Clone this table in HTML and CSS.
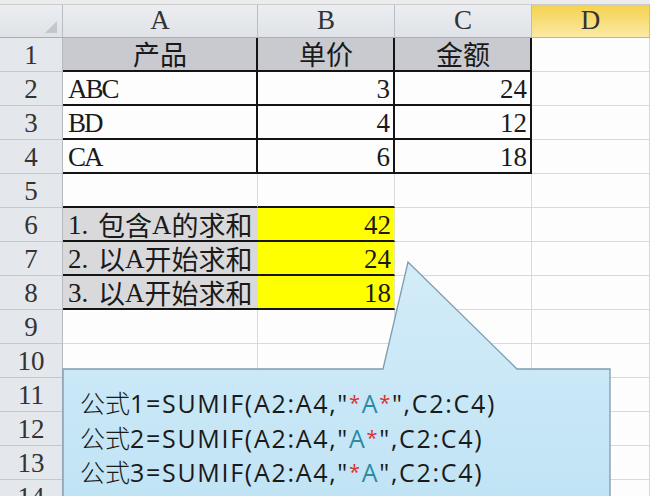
FILE: index.html
```html
<!DOCTYPE html>
<html>
<head>
<meta charset="utf-8">
<link rel="stylesheet" href="styles.css">
</head>
<body>
<div class="sheet">
  <div class="topstrip"></div>
  <div class="grid">
    <div class="ch corner"><span class="tri"></span></div>
    <div class="ch">A</div>
    <div class="ch">B</div>
    <div class="ch">C</div>
    <div class="ch sel">D</div>

    <div class="rh">1</div>
    <div class="c hd bb br"><span class="cj">产品</span></div>
    <div class="c hd bb br"><span class="cj">单价</span></div>
    <div class="c hd bb br"><span class="cj">金额</span></div>
    <div class="c"></div>

    <div class="rh">2</div>
    <div class="c bb br txt">ABC</div>
    <div class="c bb br num">3</div>
    <div class="c bb br num">24</div>
    <div class="c"></div>

    <div class="rh">3</div>
    <div class="c bb br txt">BD</div>
    <div class="c bb br num">4</div>
    <div class="c bb br num">12</div>
    <div class="c"></div>

    <div class="rh">4</div>
    <div class="c bb br txt">CA</div>
    <div class="c bb br num">6</div>
    <div class="c bb br num">18</div>
    <div class="c"></div>

    <div class="rh">5</div>
    <div class="c bb"></div>
    <div class="c bb"></div>
    <div class="c"></div>
    <div class="c"></div>

    <div class="rh">6</div>
    <div class="c lab bb"><span class="nb">1.</span><span class="cj">包含</span><span class="la">A</span><span class="cj">的求和</span></div>
    <div class="c yel bb num">42</div>
    <div class="c"></div>
    <div class="c"></div>

    <div class="rh">7</div>
    <div class="c lab bb"><span class="nb">2.</span><span class="cj">以</span><span class="la">A</span><span class="cj">开始求和</span></div>
    <div class="c yel bb num">24</div>
    <div class="c"></div>
    <div class="c"></div>

    <div class="rh">8</div>
    <div class="c lab bb"><span class="nb">3.</span><span class="cj">以</span><span class="la">A</span><span class="cj">开始求和</span></div>
    <div class="c yel bb num">18</div>
    <div class="c"></div>
    <div class="c"></div>

    <div class="rh">9</div>
    <div class="c"></div><div class="c"></div><div class="c"></div><div class="c"></div>
    <div class="rh">10</div>
    <div class="c"></div><div class="c"></div><div class="c"></div><div class="c"></div>
    <div class="rh">11</div>
    <div class="c"></div><div class="c"></div><div class="c"></div><div class="c"></div>
    <div class="rh">12</div>
    <div class="c"></div><div class="c"></div><div class="c"></div><div class="c"></div>
    <div class="rh">13</div>
    <div class="c"></div><div class="c"></div><div class="c"></div><div class="c"></div>
    <div class="rh">14</div>
    <div class="c"></div><div class="c"></div><div class="c"></div><div class="c"></div>
  </div>

  <div class="callout">
    <svg class="shape" width="650" height="496" viewBox="0 0 650 496">
      <defs>
        <linearGradient id="bg" x1="0" y1="0" x2="0" y2="1">
          <stop offset="0" stop-color="#d3ecf8"/>
          <stop offset="1" stop-color="#bfe3f5"/>
        </linearGradient>
      </defs>
      <path d="M63 369 L383 369 L408 262 L517 369 L610 369 L610 520 L63 520 Z" fill="url(#bg)" stroke="#7f9bb0" stroke-width="1.3"/>
    </svg>
    <div class="formulas">
      <div class="fl"><span class="cjf">公式</span>1=SUMIF(A2:A4,"<span class="st">*</span><span class="qa">A</span><span class="st">*</span>",C2:C4)</div>
      <div class="fl"><span class="cjf">公式</span>2=SUMIF(A2:A4,"<span class="qa">A</span><span class="st">*</span>",C2:C4)</div>
      <div class="fl"><span class="cjf">公式</span>3=SUMIF(A2:A4,"<span class="st">*</span><span class="qa">A</span>",C2:C4)</div>
    </div>
  </div>
</div>
</body>
</html>
```

FILE: styles.css
```css
html, body {
  margin: 0;
  padding: 0;
  background: #fdfdfe;
  overflow: hidden;
}
.sheet {
  position: relative;
  width: 650px;
  height: 496px;
  overflow: hidden;
}
.topstrip {
  height: 5px;
  background: #ececec;
  border-bottom: 1px solid #c9cbcf;
  box-sizing: border-box;
}
.grid {
  display: grid;
  grid-template-columns: 63px 195px 137px 137px 118px;
  grid-template-rows: 33px repeat(14, 34px);
  font-family: "Liberation Serif", "Times New Roman", serif;
  font-size: 27px;
  color: #1a1a1a;
}
.grid > div {
  box-sizing: border-box;
  border-right: 1px solid #d6d9de;
  border-bottom: 1px solid #d6d9de;
  line-height: 31px;
  white-space: nowrap;
}
.cj {
  font-family: "Noto Sans CJK SC", sans-serif;
  font-size: 27px;
  letter-spacing: 0;
  line-height: 27px;
  display: inline-block;
  vertical-align: top;
  margin-top: 1px;
}
.ch {
  background: linear-gradient(#eceef1, #dfe2e7);
  border-right: 1px solid #b9bec6 !important;
  border-bottom: 1px solid #a9aeb6 !important;
  text-align: center;
  color: #333;
  line-height: 30px !important;
}
.ch.sel {
  background: linear-gradient(#f5d24e, #f9e28a 70%, #fbeaa6);
  border-bottom: 1px solid #e2b23c !important;
}
.corner {
  position: relative;
}
.tri {
  position: absolute;
  right: 5px;
  bottom: 4px;
  width: 0;
  height: 0;
  border-left: 12px solid transparent;
  border-bottom: 12px solid #c3c7cc;
}
.rh {
  background: #e4e7eb;
  border-right: 1px solid #b6bbc3 !important;
  border-bottom: 1px solid #c4c8ce !important;
  text-align: center;
  color: #333;
  padding-top: 2px;
}
.c {
  background: #fdfdfe;
  padding: 2px 4px 0 5px;
}
.txt {
  letter-spacing: -2px;
}
.nb {
  display: inline-block;
  width: 30px;
}
.hd {
  background: #c9cacf;
  text-align: center;
  padding-top: 1px;
}
.num {
  text-align: right;
  padding-right: 3px;
}
.bb {
  border-bottom: 2px solid #141414 !important;
}
.br {
  border-right: 2px solid #141414 !important;
}
.lab {
  background: #d9d9db;
  border-right: none !important;
}
.yel {
  background: #ffff00;
  border-right: 1px solid #e8e8b0 !important;
}
.callout {
  position: absolute;
  left: 0;
  top: 0;
  width: 650px;
  height: 496px;
}
.shape {
  position: absolute;
  left: 0;
  top: 0;
}
.formulas {
  position: absolute;
  left: 80px;
  top: 385px;
  font-family: "Open Sans", "Noto Sans CJK SC", sans-serif;
  font-size: 25px;
  letter-spacing: 1.7px;
  color: #1a1a1a;
}
.fl {
  height: 34.5px;
  line-height: 34.5px;
  white-space: nowrap;
}
.cjf {
  font-family: "Noto Sans CJK SC", sans-serif;
  font-weight: 300;
  font-size: 25px;
  letter-spacing: 0;
}
.qa {
  color: #2a8ba3;
}
.st {
  color: #d8322e;
  font-size: 20px;
  vertical-align: 3px;
}
```
